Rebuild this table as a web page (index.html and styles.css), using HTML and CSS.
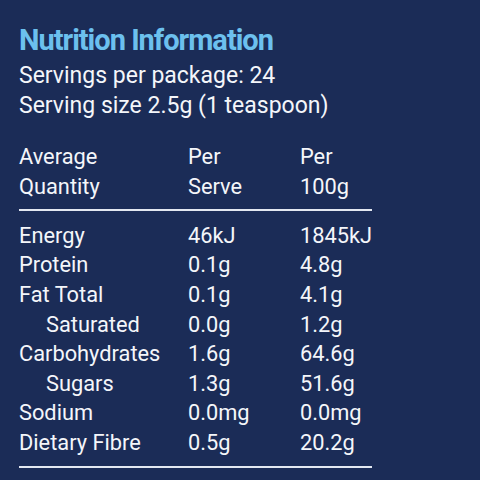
FILE: index.html
```
<!DOCTYPE html>
<html>
<head>
<meta charset="utf-8">
<link rel="stylesheet" href="styles.css">
</head>
<body>
<div class="panel">
  <h1 class="title">Nutrition Information</h1>
  <p class="meta first">Servings per package: 24</p>
  <p class="meta">Serving size 2.5g (1 teaspoon)</p>
  <div class="table">
    <div class="head">
      <div>Average<br>Quantity</div>
      <div>Per<br>Serve</div>
      <div>Per<br>100g</div>
    </div>
    <div class="rows">
      <div>Energy</div><div>46kJ</div><div>1845kJ</div>
      <div>Protein</div><div>0.1g</div><div>4.8g</div>
      <div>Fat Total</div><div>0.1g</div><div>4.1g</div>
      <div class="sub">Saturated</div><div>0.0g</div><div>1.2g</div>
      <div>Carbohydrates</div><div>1.6g</div><div>64.6g</div>
      <div class="sub">Sugars</div><div>1.3g</div><div>51.6g</div>
      <div>Sodium</div><div>0.0mg</div><div>0.0mg</div>
      <div>Dietary Fibre</div><div>0.5g</div><div>20.2g</div>
    </div>
  </div>
</div>
</body>
</html>
```
FILE: styles.css
```
html, body {
  margin: 0;
  padding: 0;
  background: #1b2c57;
}
.panel {
  width: 480px;
  height: 480px;
  box-sizing: border-box;
  padding: 23px 0 0 19px;
  color: #f4f6fa;
  font-family: Roboto, "Liberation Sans", sans-serif;
}
.title {
  margin: 0;
  font-size: 29px;
  line-height: 34px;
  font-weight: 700;
  letter-spacing: -1px;
  color: #6cc0ee;
}
.meta {
  margin: 0;
  font-size: 23px;
  line-height: 29.5px;
}
.meta.first {
  margin-top: 4.4px;
}
.table {
  width: 353px;
  margin-top: 21.2px;
  font-size: 21.8px;
}
.head, .rows {
  display: grid;
  grid-template-columns: 169px 112px 1fr;
}
.head {
  line-height: 30px;
  padding-bottom: 7.4px;
  border-bottom: 2px solid #e3e8f1;
}
.rows {
  line-height: 29.6px;
  padding-top: 9.8px;
  padding-bottom: 8.4px;
  border-bottom: 2px solid #e3e8f1;
}
.sub {
  padding-left: 27px;
}
```
